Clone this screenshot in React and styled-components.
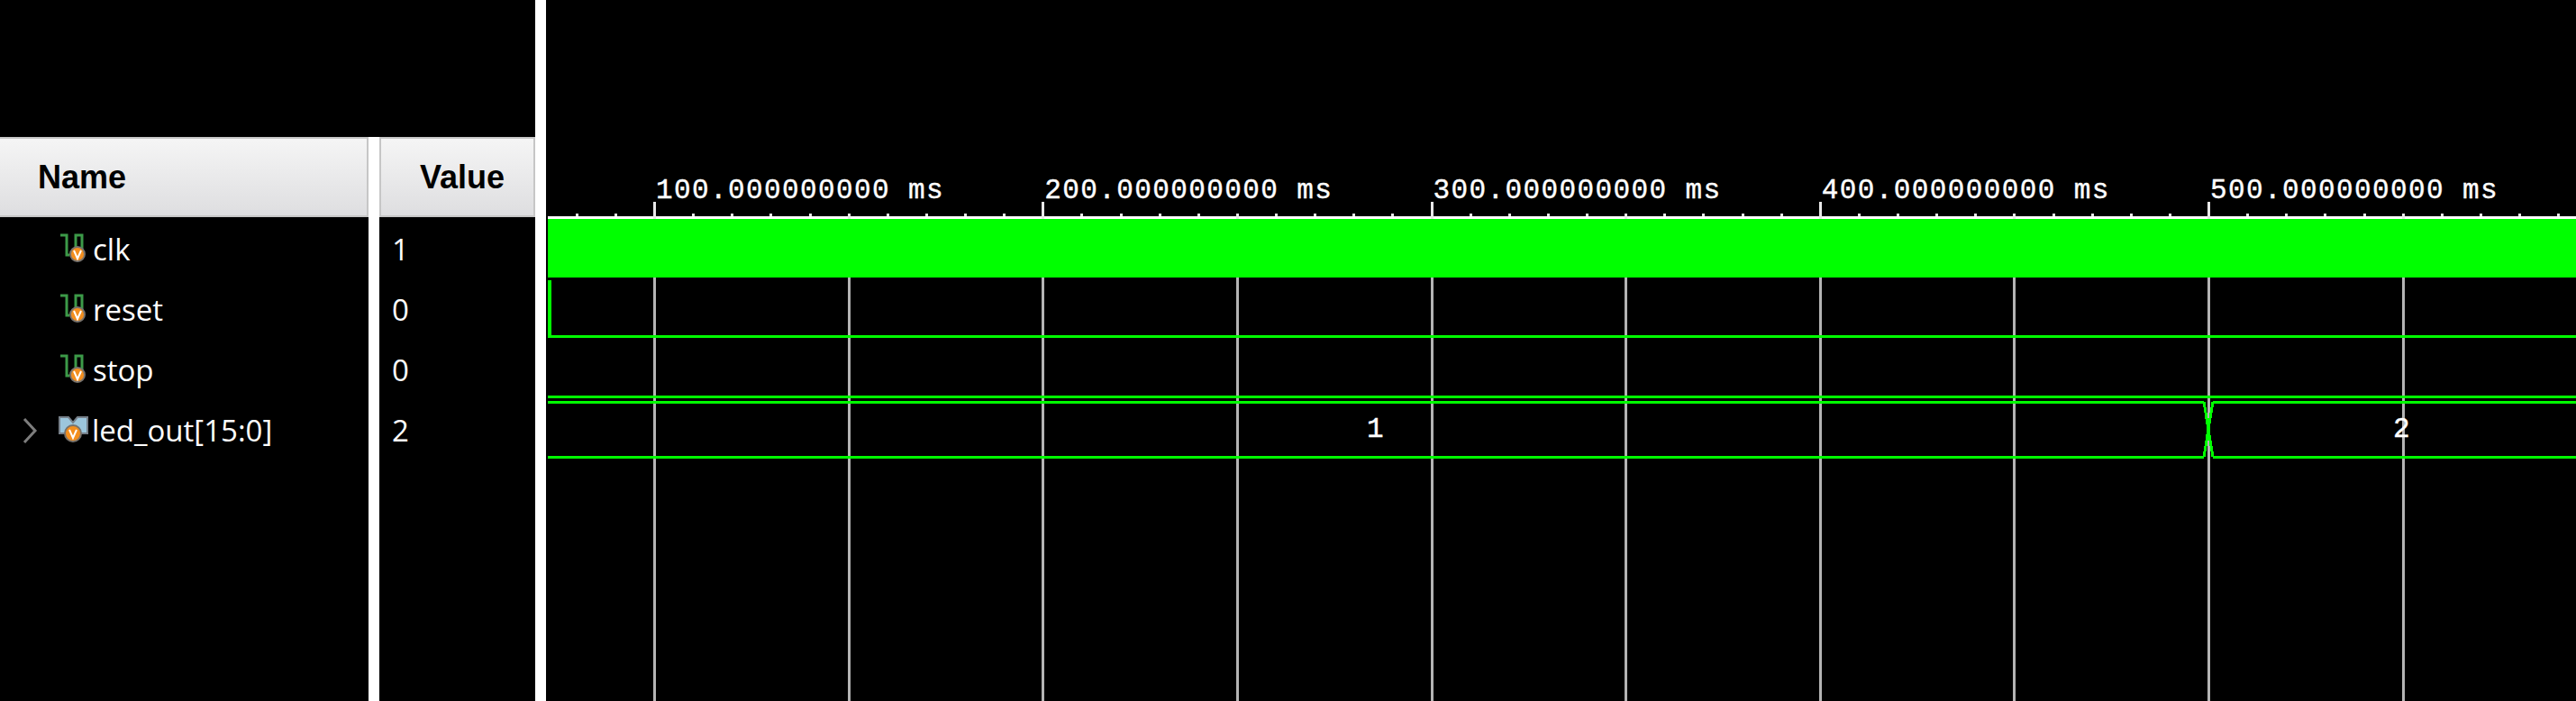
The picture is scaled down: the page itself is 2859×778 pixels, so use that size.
import React from "react";
import styled, { createGlobalStyle } from "styled-components";

const Global = createGlobalStyle`
  html, body { margin: 0; padding: 0; background: #000; overflow: hidden; }
  #root { width: 2859px; height: 778px; }
`;

const Page = styled.div`
  display: flex;
  width: 2859px;
  height: 778px;
  background: #000;
`;

const Column = styled.div`
  display: flex;
  flex-direction: column;
  flex: none;
  width: ${(p) => p.$width}px;
  padding-top: 152px;
  box-sizing: border-box;
`;

const Splitter = styled.div`
  flex: none;
  width: ${(p) => p.$width}px;
  margin-top: ${(p) => p.$top || 0}px;
  background: ${(p) => p.$color || "#fff"};
`;

const Header = styled.div`
  display: flex;
  align-items: center;
  box-sizing: border-box;
  height: 89px;
  padding-left: ${(p) => p.$pad}px;
  padding-top: 1px;
  background: linear-gradient(#f5f5f5, #dedee0);
  border: 2px solid #c6c6c6;
  border-left: ${(p) => (p.$leftEdge ? "2px solid #c6c6c6" : "none")};
  font: bold 36px "Liberation Sans", Arial, sans-serif;
  color: #000;
`;

const Rows = styled.div`
  display: flex;
  flex-direction: column;
  padding-top: 2px;
`;

const Row = styled.div`
  display: flex;
  align-items: center;
  height: 67px;
  color: #fff;
  font: 33px "Open Sans", sans-serif;
  white-space: nowrap;
  padding-left: ${(p) => p.$pad || 0}px;
`;

const Expander = styled.svg`
  flex: none;
  width: 18px;
  height: 30px;
  margin: 0 23px 0 24px;
`;

const IconSlot = styled.svg`
  flex: none;
  width: ${(p) => p.$width}px;
  height: 36px;
  margin-left: ${(p) => p.$left}px;
`;

const Wave = styled.svg`
  flex: none;
  display: block;
  width: 2251px;
  height: 778px;
`;

const TimeLabel = styled.text`
  font-family: "Liberation Mono", monospace;
  font-size: 31px;
  letter-spacing: 1.4px;
  fill: #fff;
  stroke: #fff;
  stroke-width: 0.4px;
`;

const BusLabel = styled(TimeLabel)`
  letter-spacing: 0;
`;

const Badge = ({ cx, cy, r }) => (
  <>
    <circle cx={cx} cy={cy} r={r} fill="#f48f1e" stroke="#77726c" strokeWidth="2" />
    <path
      d={`M${cx - 4} ${cy - 4} L${cx} ${cy + 5} L${cx + 4} ${cy - 4}`}
      fill="none"
      stroke="#fff"
      strokeWidth="2"
    />
  </>
);

const BitIcon = () => (
  <IconSlot viewBox="0 0 36 36" $left={67} $width={36}>
    <path d="M0 2 H7 V24 H10 M17 24 V2 H24 V24" fill="none" stroke="#3c9a48" strokeWidth="3" />
    <Badge cx={19} cy={23} r={8} />
  </IconSlot>
);

const BusIcon = () => (
  <IconSlot viewBox="0 0 37 36" $left={0} $width={37}>
    <path d="M1 3 H11 L16 9 L21 3 H32 V21 H1 Z" fill="#9cc6dc" stroke="#77808a" strokeWidth="2" />
    <Badge cx={16} cy={21} r={9} />
  </IconSlot>
);

const X0 = 608;
const px = (x) => x - X0;
const ms = (t) => 294.75 + t * 4.3125;
const majors = [100, 200, 300, 400, 500];
const grid = [50, 100, 150, 200, 250, 300, 350, 400, 450, 500, 550];
const ticks = Array.from({ length: 60 }, (_, i) => i * 10).filter((t) => ms(t) >= X0);
const green = "#00ff00";

const signals = [
  { name: "clk", value: "1" },
  { name: "reset", value: "0" },
  { name: "stop", value: "0" },
];

export default function App() {
  return (
    <Page>
      <Global />
      <Column $width={409}>
        <Header $pad={42}>Name</Header>
        <Rows>
          {signals.map((s) => (
            <Row key={s.name}>
              <BitIcon />
              {s.name}
            </Row>
          ))}
          <Row>
            <Expander viewBox="0 0 18 30">
              <path d="M3 2 L15 15 L3 28" fill="none" stroke="#7d7d7d" strokeWidth="3" />
            </Expander>
            <BusIcon />
            led_out[15:0]
          </Row>
        </Rows>
      </Column>
      <Splitter $width={12} $top={152} />
      <Column $width={173}>
        <Header $pad={43} $leftEdge>Value</Header>
        <Rows>
          {[...signals.map((s) => s.value), "2"].map((v, i) => (
            <Row key={i} $pad={14}>
              {v}
            </Row>
          ))}
        </Rows>
      </Column>
      <Splitter $width={12} />
      <Splitter $width={2} $color="#000" />
      <Wave viewBox="0 0 2251 778" shapeRendering="crispEdges">
        {grid.map((t) => (
          <rect key={t} x={px(ms(t)) - 1} y={240} width={3} height={538} fill="#b4b4b4" />
        ))}
        <rect x={0} y={240} width={2251} height={3} fill="#fff" />
        {ticks.map((t) => (
          <rect key={t} x={px(ms(t)) - 1} y={237} width={3} height={3} fill="#e8e8e8" />
        ))}
        {grid.map((t) =>
          majors.includes(t) ? (
            <rect key={t} x={px(ms(t)) - 1} y={224} width={3} height={19} fill="#e8e8e8" />
          ) : (
            <rect key={t} x={px(ms(t)) - 1} y={237} width={3} height={6} fill="#e8e8e8" />
          )
        )}
        {majors.map((t) => (
          <TimeLabel key={t} x={px(ms(t)) + 2} y={220}>
            {t}.000000000 ms
          </TimeLabel>
        ))}
        <rect x={0} y={243} width={2251} height={65} fill={green} />
        <rect x={0} y={311} width={4} height={64} fill={green} />
        <rect x={0} y={372} width={2251} height={3} fill={green} />
        <rect x={0} y={439} width={2251} height={3} fill={green} />
        <rect x={0} y={445} width={1838} height={3} fill={green} />
        <rect x={1848} y={445} width={403} height={3} fill={green} />
        <rect x={0} y={506} width={1838} height={3} fill={green} />
        <rect x={1848} y={506} width={403} height={3} fill={green} />
        <path
          d="M1838 446 L1848 507 M1848 446 L1838 507"
          fill="none"
          stroke={green}
          strokeWidth="3"
        />
        <BusLabel x={909} y={485}>1</BusLabel>
        <BusLabel x={2048} y={485}>2</BusLabel>
      </Wave>
    </Page>
  );
}
